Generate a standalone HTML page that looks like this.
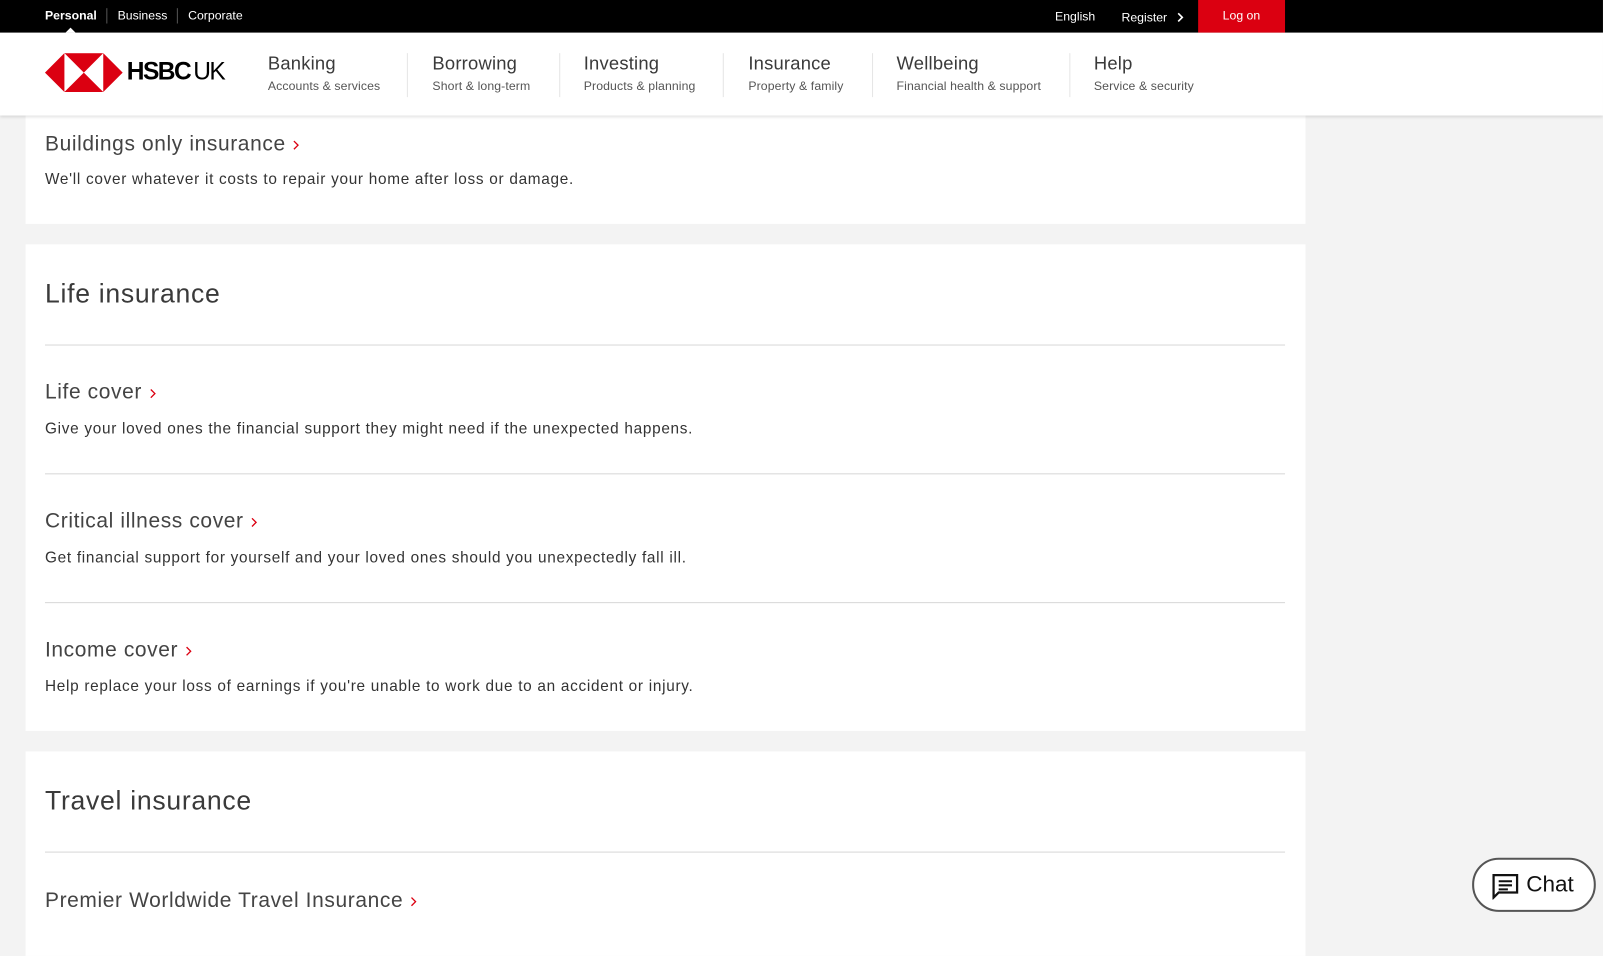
<!DOCTYPE html>
<html><head><meta charset="utf-8"><style>
html,body{margin:0;padding:0;width:1603px;height:928px;overflow:hidden;background:#f3f3f3;font-family:"Liberation Sans",Arial,sans-serif;color:#333}
#w{position:absolute;left:0;top:0;width:1568px;height:908px;transform:scale(1.0223);transform-origin:0 0}
.a{position:absolute;white-space:nowrap}
.top{position:absolute;left:0;top:0;width:1568px;height:32px;background:#000}
.hdr{position:absolute;left:0;top:32px;width:1568px;height:81px;background:#fff;box-shadow:0 2px 3px rgba(0,0,0,.12);z-index:2}
.card{position:absolute;left:25px;width:1252px;background:#fff}
.t{font-size:18px;color:#3a3a3a;letter-spacing:0.2px}
.s{font-size:12px;color:#555;letter-spacing:0.1px}
.sep{position:absolute;top:20px;width:1px;height:43px;background:#e5e5e5}
.h{font-size:20.5px;color:#444;letter-spacing:0.6px}
.d{font-size:15px;color:#333;letter-spacing:0.7px}
.sec{font-size:26px;color:#3a3a3a;letter-spacing:0.7px}
.ln{position:absolute;left:19px;width:1213px;height:1px;background:#d7d7d7}
.ch{display:inline-block;margin-left:7px;vertical-align:-1px}
</style></head><body><div id="w">
<div class="top">
 <span class="a" style="left:44px;top:8px;font-size:12px;color:#fff;font-weight:bold">Personal</span>
 <div class="a" style="left:104px;top:8px;width:1px;height:15px;background:#555"></div>
 <span class="a" style="left:115px;top:8px;font-size:12px;color:#fff">Business</span>
 <div class="a" style="left:173px;top:8px;width:1px;height:15px;background:#555"></div>
 <span class="a" style="left:184px;top:8px;font-size:12px;color:#fff">Corporate</span>
 <div class="a" style="left:64px;top:27px;width:0;height:0;border-left:5px solid transparent;border-right:5px solid transparent;border-bottom:5px solid #fff"></div>
 <span class="a" style="left:1032px;top:9px;font-size:12px;color:#fff">English</span>
 <span class="a" style="left:1097px;top:10px;font-size:12px;color:#fff">Register</span>
 <svg class="a" style="left:1151px;top:12px" width="7" height="10" viewBox="0 0 7 10"><path d="M1.5 1l4 4-4 4" stroke="#fff" stroke-width="1.6" fill="none"/></svg>
 <div class="a" style="left:1172px;top:0;width:85px;height:32px;background:#db0011"></div>
 <span class="a" style="left:1196px;top:8px;font-size:12px;color:#fff">Log on</span>
</div>
<div class="hdr">
 <svg class="a" style="left:44px;top:20px" width="76" height="38" viewBox="0 0 76 38">
  <polygon points="0,19 19,0 19,38" fill="#db0011"/>
  <polygon points="76,19 57,0 57,38" fill="#db0011"/>
  <polygon points="19,0 57,0 38,19" fill="#db0011"/>
  <polygon points="19,38 57,38 38,19" fill="#db0011"/>
 </svg>
 <span class="a" style="left:124px;top:25px;font-size:24px;font-weight:bold;color:#000;letter-spacing:-1.5px">HSBC</span>
 <span class="a" style="left:189px;top:25px;font-size:24px;color:#000;letter-spacing:-1.5px">UK</span>
 <span class="a t" style="left:262px;top:20px">Banking</span><span class="a s" style="left:262px;top:45px">Accounts &amp; services</span>
 <div class="sep" style="left:398px"></div>
 <span class="a t" style="left:423px;top:20px">Borrowing</span><span class="a s" style="left:423px;top:45px">Short &amp; long-term</span>
 <div class="sep" style="left:547px"></div>
 <span class="a t" style="left:571px;top:20px">Investing</span><span class="a s" style="left:571px;top:45px">Products &amp; planning</span>
 <div class="sep" style="left:707px"></div>
 <span class="a t" style="left:732px;top:20px">Insurance</span><span class="a s" style="left:732px;top:45px">Property &amp; family</span>
 <div class="sep" style="left:853px"></div>
 <span class="a t" style="left:877px;top:20px">Wellbeing</span><span class="a s" style="left:877px;top:45px">Financial health &amp; support</span>
 <div class="sep" style="left:1046px"></div>
 <span class="a t" style="left:1070px;top:20px">Help</span><span class="a s" style="left:1070px;top:45px">Service &amp; security</span>
</div>

<div class="card" style="top:100px;height:119px">
 <span class="a h" style="left:19px;top:29px">Buildings only insurance<svg class="ch" width="8" height="12" viewBox="0 0 8 12"><path d="M1.5 2l4 4-4 4" stroke="#db0011" stroke-width="1.3" fill="none"/></svg></span>
 <span class="a d" style="left:19px;top:67px">We'll cover whatever it costs to repair your home after loss or damage.</span>
</div>

<div class="card" style="top:239px;height:476px">
 <span class="a sec" style="left:19px;top:33px">Life insurance</span>
 <div class="ln" style="top:98px"></div>
 <span class="a h" style="left:19px;top:133px">Life cover<svg class="ch" width="8" height="12" viewBox="0 0 8 12"><path d="M1.5 2l4 4-4 4" stroke="#db0011" stroke-width="1.3" fill="none"/></svg></span>
 <span class="a d" style="left:19px;top:172px">Give your loved ones the financial support they might need if the unexpected happens.</span>
 <div class="ln" style="top:224px"></div>
 <span class="a h" style="left:19px;top:259px">Critical illness cover<svg class="ch" width="8" height="12" viewBox="0 0 8 12"><path d="M1.5 2l4 4-4 4" stroke="#db0011" stroke-width="1.3" fill="none"/></svg></span>
 <span class="a d" style="left:19px;top:298px">Get financial support for yourself and your loved ones should you unexpectedly fall ill.</span>
 <div class="ln" style="top:350px"></div>
 <span class="a h" style="left:19px;top:385px">Income cover<svg class="ch" width="8" height="12" viewBox="0 0 8 12"><path d="M1.5 2l4 4-4 4" stroke="#db0011" stroke-width="1.3" fill="none"/></svg></span>
 <span class="a d" style="left:19px;top:424px">Help replace your loss of earnings if you're unable to work due to an accident or injury.</span>
</div>

<div class="card" style="top:735px;height:200px">
 <span class="a sec" style="left:19px;top:33px">Travel insurance</span>
 <div class="ln" style="top:98px"></div>
 <span class="a h" style="left:19px;top:134px">Premier Worldwide Travel Insurance<svg class="ch" width="8" height="12" viewBox="0 0 8 12"><path d="M1.5 2l4 4-4 4" stroke="#db0011" stroke-width="1.3" fill="none"/></svg></span>
</div>

<div class="a" style="left:1440px;top:839px;width:117px;height:49px;border:2px solid #555;border-radius:26px;background:#fff">
 <svg class="a" style="left:17px;top:13px" width="28" height="26" viewBox="0 0 28 26"><path d="M2 2h23v17H7l-5 5z" stroke="#111" stroke-width="2.2" fill="none" stroke-linejoin="miter"/><path d="M7 8h13M7 12h13M7 16h9" stroke="#111" stroke-width="2"/></svg>
 <span class="a" style="left:51px;top:11px;font-size:22px;color:#111">Chat</span>
</div>
</div></body></html>
